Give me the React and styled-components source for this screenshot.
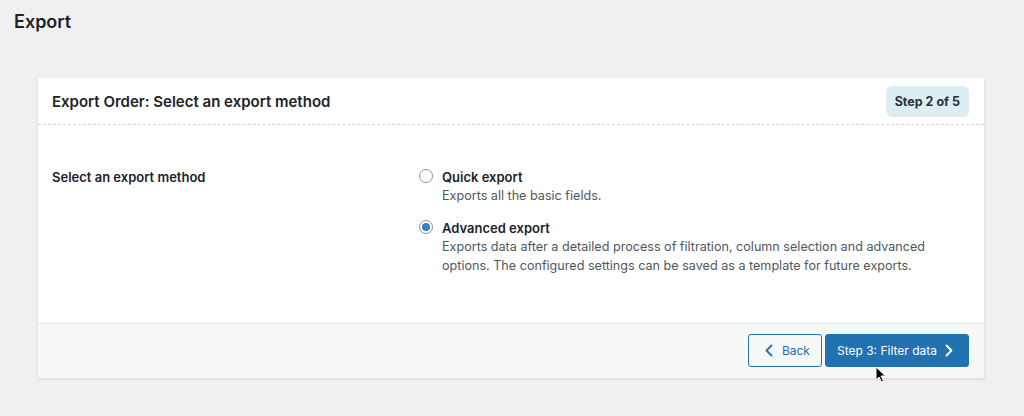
import React, { useState } from 'react';
import styled, { createGlobalStyle } from 'styled-components';

const GlobalStyle = createGlobalStyle`
  body {
    margin: 0;
    background: #f0f0f1;
    font-family: Inter, "Noto Sans", "Liberation Sans", sans-serif;
    color: #1d2327;
    -webkit-font-smoothing: antialiased;
  }
`;

const Page = styled.div`
  padding: 10px 40px 40px 0;
`;

const PageTitle = styled.h1`
  margin: 0 0 44px 14px;
  font-size: 18px;
  line-height: 24px;
  font-weight: 600;
  color: #1d2327;
`;

const Card = styled.div`
  position: relative;
  margin-left: 38px;
  background: #fff;
  box-shadow: 0 1px 3px rgba(0, 0, 0, 0.12);
`;

const CardHeader = styled.div`
  display: flex;
  align-items: center;
  justify-content: space-between;
  height: 46px;
  padding: 0 15px 0 14px;
  border-bottom: 1px dashed #d5d5d8;
`;

const CardTitle = styled.h2`
  margin: 0;
  font-size: 15px;
  font-weight: 600;
  color: #1d2327;
`;

const StepBadge = styled.span`
  display: inline-flex;
  align-items: center;
  height: 31px;
  padding: 0 9px;
  border-radius: 6px;
  background: #ddeef2;
  color: #2c3338;
  font-size: 12.5px;
  font-weight: 700;
`;

const CardBody = styled.div`
  display: grid;
  grid-template-columns: 367px 1fr;
  padding: 43px 14px 48px;
`;

const FieldLabel = styled.div`
  font-size: 13px;
  font-weight: 600;
  line-height: 18px;
`;

const OptionList = styled.div`
  display: flex;
  flex-direction: column;
  gap: 14px;
`;

const Option = styled.label`
  display: grid;
  grid-template-columns: 23px 1fr;
  cursor: pointer;
`;

const Radio = styled.span`
  width: 14px;
  height: 14px;
  margin-top: 1px;
  border-radius: 50%;
  border: 1px solid #8c8f94;
  box-sizing: border-box;
  display: flex;
  align-items: center;
  justify-content: center;
  background: #fff;

  &::after {
    content: '';
    width: 8px;
    height: 8px;
    border-radius: 50%;
    background: #3582c4;
    display: ${p => (p.$checked ? 'block' : 'none')};
  }
`;

const OptionTitle = styled.div`
  font-size: 13px;
  font-weight: 600;
  line-height: 18px;
`;

const OptionDesc = styled.div`
  font-size: 12.6px;
  line-height: 19px;
  color: #50575e;
  max-width: 500px;
`;

const CardFooter = styled.div`
  display: flex;
  justify-content: flex-end;
  gap: 3px;
  padding: 10px 15px 11px;
  background: #f6f7f7;
  border-top: 1px solid #e4e4e6;
`;

const Button = styled.button`
  display: inline-flex;
  align-items: center;
  gap: ${p => (p.$primary ? '8px' : '9px')};
  height: 33px;
  padding: ${p => (p.$primary ? '0 15px 0 11px' : '0 11px 0 16px')};
  border-radius: 3px;
  border: 1px solid #2271b1;
  background: ${p => (p.$primary ? '#2271b1' : '#f6f7f7')};
  color: ${p => (p.$primary ? '#fff' : '#2271b1')};
  font-family: inherit;
  font-size: 12px;
  cursor: pointer;
`;

const Cursor = styled.svg`
  position: absolute;
  left: 837px;
  top: 288px;
  pointer-events: none;
`;

const Chevron = ({ dir }) => (
  <svg width="8" height="13" viewBox="0 0 8 13" fill="none">
    <path
      d={dir === 'left' ? 'M6.5 1.5 L1.5 6.5 L6.5 11.5' : 'M1.5 1.5 L6.5 6.5 L1.5 11.5'}
      stroke="currentColor"
      strokeWidth="1.8"
      strokeLinecap="round"
      strokeLinejoin="round"
    />
  </svg>
);

const options = [
  { id: 'quick', title: 'Quick export', desc: 'Exports all the basic fields.' },
  {
    id: 'advanced',
    title: 'Advanced export',
    desc: 'Exports data after a detailed process of filtration, column selection and advanced options. The configured settings can be saved as a template for future exports.',
  },
];

export default function App() {
  const [method, setMethod] = useState('advanced');

  return (
    <>
      <GlobalStyle />
      <Page>
        <PageTitle>Export</PageTitle>
        <Card>
          <CardHeader>
            <CardTitle>Export Order: Select an export method</CardTitle>
            <StepBadge>Step 2 of 5</StepBadge>
          </CardHeader>
          <CardBody>
            <FieldLabel>Select an export method</FieldLabel>
            <OptionList>
              {options.map(o => (
                <Option key={o.id} onClick={() => setMethod(o.id)}>
                  <Radio $checked={method === o.id} />
                  <div>
                    <OptionTitle>{o.title}</OptionTitle>
                    <OptionDesc>{o.desc}</OptionDesc>
                  </div>
                </Option>
              ))}
            </OptionList>
          </CardBody>
          <CardFooter>
            <Button>
              <Chevron dir="left" />
              Back
            </Button>
            <Button $primary>
              Step 3: Filter data
              <Chevron dir="right" />
            </Button>
          </CardFooter>
          <Cursor width="12" height="17" viewBox="0 0 12 17">
            <path d="M1 1 L1 14 L4 11 L6.5 16 L8.5 15 L6 10 L10.5 10 Z" fill="#000" stroke="#fff" strokeWidth="1" strokeLinejoin="round" />
          </Cursor>
        </Card>
      </Page>
    </>
  );
}
